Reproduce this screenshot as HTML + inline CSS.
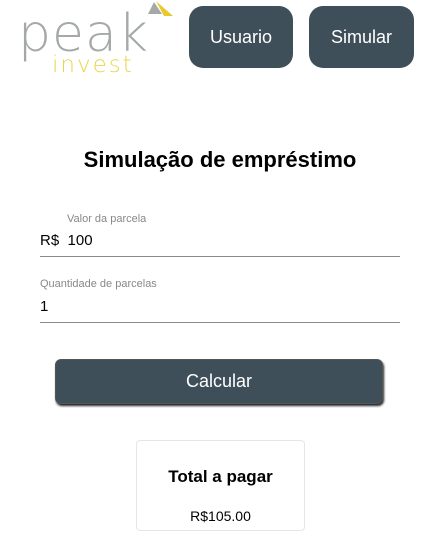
<!DOCTYPE html>
<html><head><meta charset="utf-8"><style>
body{margin:0;width:425px;height:560px;background:#fff;font-family:"Liberation Sans",sans-serif;position:relative;overflow:hidden}
.a{position:absolute}
.btn{position:absolute;top:6px;height:62px;background:#3f4f59;border-radius:14px;color:#fff;font-size:18px;display:flex;align-items:center;justify-content:center}
.lbl{color:#888;font-size:11px}
.line{position:absolute;left:40px;width:360px;height:1px;background:#8a8a8a}
</style></head><body>
<div class="a" style="left:18px;top:4px;font-size:52px;color:#a4a9a8;letter-spacing:1px;font-family:'DejaVu Sans',sans-serif;font-weight:200">peak</div>
<div class="a" style="left:52px;top:52px;font-size:23px;color:#e9d64a;letter-spacing:2px;font-family:'DejaVu Sans',sans-serif;font-weight:200">invest</div>
<svg class="a" style="left:140px;top:0" width="34" height="18"><polygon points="14,2 8,14 22,14" fill="#a4a9a8"/><polygon points="16,1 24,16 33,16" fill="#e9c92e"/></svg>
<div class="btn" style="left:189px;width:104px">Usuario</div>
<div class="btn" style="left:309px;width:105px">Simular</div>
<div class="a" style="left:0;width:440px;top:147px;text-align:center;font-size:22px;font-weight:bold">Simulação de empréstimo</div>
<div class="a lbl" style="left:67px;top:213px">Valor da parcela</div>
<div class="a" style="left:40px;top:232px;font-size:15px">R$&nbsp;&nbsp;100</div>
<div class="line" style="top:256px"></div>
<div class="a lbl" style="left:40px;top:278px">Quantidade de parcelas</div>
<div class="a" style="left:40px;top:298px;font-size:15px">1</div>
<div class="line" style="top:322px"></div>
<div class="a" style="left:55px;top:359px;width:326px;height:43px;background:#3f4f59;border:1px solid #555;border-radius:6px;box-shadow:1px 2px 2px #222;color:#fff;font-size:18px;display:flex;align-items:center;justify-content:center">Calcular</div>
<div class="a" style="left:136px;top:440px;width:167px;height:89px;border:1px solid #e6e6e6;border-radius:4px"></div>
<div class="a" style="left:136px;width:169px;top:467px;text-align:center;font-size:17px;font-weight:bold">Total a pagar</div>
<div class="a" style="left:136px;width:169px;top:508px;text-align:center;font-size:14px">R$105.00</div>
</body></html>
